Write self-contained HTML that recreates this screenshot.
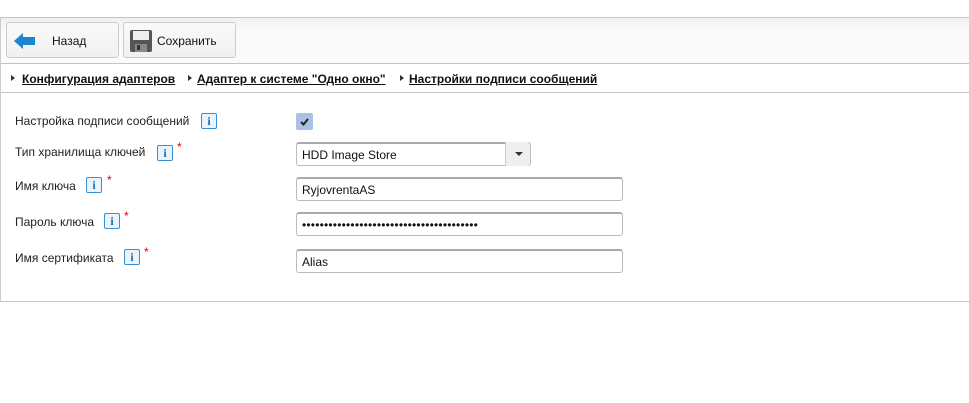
<!DOCTYPE html>
<html><head><meta charset="utf-8"><style>
*{box-sizing:border-box;margin:0;padding:0}
body{width:969px;height:403px;background:#fff;font-family:"Liberation Sans",Arial,sans-serif;font-size:12px;color:#222;position:relative;overflow:hidden}
.panel{position:absolute;left:0;top:17px;width:969px;height:285px;border-top:1px solid #c4c4c4;border-left:1px solid #ccc;border-bottom:1px solid #c4c4c4}
.tb{position:absolute;left:0;top:0;width:968px;height:46px;background:linear-gradient(#f0f0f0,#fafafa 30%,#fbfbfb);border-bottom:1px solid #c4c4c4}
.btn{position:absolute;top:4px;height:36px;border:1px solid #ccc;border-radius:3px;background:linear-gradient(#fafafa,#f0f0f0);font-size:12px;color:#111}
.bc{position:absolute;left:0;top:47px;width:968px;height:28px;border-bottom:1px solid #c4c4c4;font-weight:bold;font-size:12px}
.bc span{position:absolute;top:7px;text-decoration:underline;color:#111}
.bc i{position:absolute;top:10px;width:0;height:0;border-left:4px solid #333;border-top:3px solid transparent;border-bottom:3px solid transparent}
.lbl{position:absolute;left:15px;font-size:12px;color:#222}
.inf{position:absolute;width:16px;height:16px;border:1px solid #3a8fd0;border-radius:2px;background:#eaf4fc;color:#1d6fb0;font:bold 12px "Liberation Serif",serif;text-align:center;line-height:14px}
.req{position:absolute;color:#d00;font-size:12px}
.inp{position:absolute;left:296px;width:327px;height:24px;border:1px solid #bbb;border-top:2px solid #aaa;border-radius:3px;font-size:12px;padding:4px 0 0 5px;color:#111}
</style></head><body>
<div class="panel">
 <div class="tb">
  <div class="btn" style="left:5px;width:113px">
   <svg style="position:absolute;left:7px;top:10px" width="22" height="16" viewBox="0 0 22 16"><path d="M0 8 L9 0 L9 4 L21 4 L21 12 L9 12 L9 16 Z" fill="#1a86d0"/></svg>
   <span style="position:absolute;left:45px;top:11px">Назад</span>
  </div>
  <div class="btn" style="left:122px;width:113px">
   <svg style="position:absolute;left:6px;top:7px" width="22" height="22" viewBox="0 0 22 22"><rect x="0" y="0" width="22" height="22" rx="2" fill="#555"/><rect x="3" y="1" width="16" height="9" fill="#eee"/><rect x="5" y="14" width="12" height="8" fill="#888"/><rect x="7" y="15" width="3" height="5" fill="#333"/></svg>
   <span style="position:absolute;left:33px;top:11px">Сохранить</span>
  </div>
 </div>
 <div class="bc">
  <i style="left:10px"></i><span style="left:21px">Конфигурация адаптеров</span>
  <i style="left:187px"></i><span style="left:196px">Адаптер к системе "Одно окно"</span>
  <i style="left:399px"></i><span style="left:408px">Настройки подписи сообщений</span>
 </div>
</div>
<div class="lbl" style="top:114px">Настройка подписи сообщений</div><div class="inf" style="left:201px;top:113px">i</div>
<div style="position:absolute;left:296px;top:113px;width:17px;height:17px;background:#a9c1e4;border-radius:2px"><svg width="17" height="17" viewBox="0 0 17 17"><path d="M5 9 L7.5 11.5 L12 6" stroke="#222" stroke-width="2" fill="none"/></svg></div>
<div class="lbl" style="top:145px">Тип хранилища ключей</div><div class="inf" style="left:157px;top:145px">i</div><div class="req" style="left:177px;top:140px">*</div>
<div class="inp" style="top:142px;width:235px;background:#fff">HDD Image Store<div style="position:absolute;right:0;top:-2px;width:25px;height:24px;border-left:1px solid #ccc;background:#efefef;border-radius:0 3px 3px 0"><div style="position:absolute;left:9px;top:10px;border-top:4px solid #333;border-left:4px solid transparent;border-right:4px solid transparent"></div></div></div>
<div class="lbl" style="top:179px">Имя ключа</div><div class="inf" style="left:86px;top:177px">i</div><div class="req" style="left:107px;top:173px">*</div>
<div class="inp" style="top:177px">RyjovrentaAS</div>
<div class="lbl" style="top:215px">Пароль ключа</div><div class="inf" style="left:104px;top:213px">i</div><div class="req" style="left:124px;top:209px">*</div>
<div class="inp" style="top:212px;font-size:12px;letter-spacing:0.2px;padding-top:4px;white-space:nowrap;overflow:hidden">••••••••••••••••••••••••••••••••••••••••</div>
<div class="lbl" style="top:251px">Имя сертификата</div><div class="inf" style="left:124px;top:249px">i</div><div class="req" style="left:144px;top:245px">*</div>
<div class="inp" style="top:249px">Alias</div>
</body></html>
